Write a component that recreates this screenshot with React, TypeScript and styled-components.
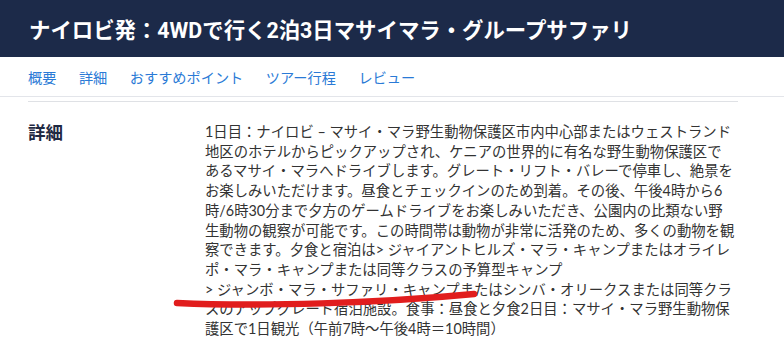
import styled, { createGlobalStyle } from "styled-components";

const GlobalStyle = createGlobalStyle`
  body {
    margin: 0;
    background: #fff;
    font-family: "Lato", "Noto Sans CJK JP", sans-serif;
  }
`;

const navItems = ["概要", "詳細", "おすすめポイント", "ツアー行程", "レビュー"];

const detailLines = [
  "1日目：ナイロビ – マサイ・マラ野生動物保護区市内中心部またはウェストランド",
  "地区のホテルからピックアップされ、ケニアの世界的に有名な野生動物保護区で",
  "あるマサイ・マラへドライブします。グレート・リフト・バレーで停車し、絶景を",
  "お楽しみいただけます。昼食とチェックインのため到着。その後、午後4時から6",
  "時/6時30分まで夕方のゲームドライブをお楽しみいただき、公園内の比類ない野",
  "生動物の観察が可能です。この時間帯は動物が非常に活発のため、多くの動物を観",
  "察できます。夕食と宿泊は> ジャイアントヒルズ・マラ・キャンプまたはオライレ",
  "ポ・マラ・キャンプまたは同等クラスの予算型キャンプ",
  "> ジャンボ・マラ・サファリ・キャンプまたはシンバ・オリークスまたは同等クラ",
  "スのアップグレード宿泊施設。食事：昼食と夕食2日目：マサイ・マラ野生動物保",
  "護区で1日観光（午前7時～午後4時＝10時間）",
];

const App = () => {
  return (
    <Page>
      <GlobalStyle />
      <Header>
        <Title>ナイロビ発：4WDで行く2泊3日マサイマラ・グループサファリ</Title>
      </Header>
      <Nav>
        {navItems.map((item) => (
          <NavLink key={item}>{item}</NavLink>
        ))}
      </Nav>
      <Content>
        <Section>
          <SectionTitle>詳細</SectionTitle>
          <Body>
            {detailLines.map((line, i) => (
              <Line key={i}>{line}</Line>
            ))}
          </Body>
        </Section>
      </Content>
      {/* red pen mark drawn over the text */}
      <Scribble width="784" height="340" viewBox="0 0 784 340">
        <path
          d="M177 303 C 260 307, 380 303, 474 294"
          fill="none"
          stroke="#e11d1d"
          strokeWidth="6.5"
          strokeLinecap="round"
        />
      </Scribble>
    </Page>
  );
};

export default App;

const Page = styled.div`
  position: relative;
  width: 784px;
  height: 340px;
  overflow: hidden;
`;

const Header = styled.header`
  height: 57px;
  padding: 0 29px;
  display: flex;
  align-items: center;
  background-color: #1c2a49;
`;

const Title = styled.h1`
  margin: 0;
  color: #fff;
  font-size: 21.4px;
  font-weight: 700;
  font-family: "Roboto", "Noto Sans CJK JP", sans-serif;
`;

const Nav = styled.nav`
  height: 39px;
  padding: 0 28px;
  display: flex;
  align-items: center;
  column-gap: 22.5px;
  border-bottom: 1px solid #e3e5ea;
`;

const NavLink = styled.a`
  color: #2a7ad6;
  font-size: 14.2px;
  font-family: "Roboto", "Noto Sans CJK JP", sans-serif;
  cursor: pointer;
`;

const Content = styled.main`
  margin: 4px 46px 0 28px;
  border-top: 1px solid #dfe1e5;
`;

const Section = styled.section`
  padding-top: 20px;
  display: flex;
  align-items: flex-start;
`;

const SectionTitle = styled.h2`
  width: 177px;
  margin: 0;
  flex-shrink: 0;
  color: #1f2942;
  font-size: 17.5px;
  line-height: 20px;
  font-weight: 700;
  font-family: "Noto Sans CJK JP", sans-serif;
`;

const Body = styled.div`
  color: #333;
  font-size: 14.35px;
  line-height: 19.7px;
`;

const Line = styled.div`
  white-space: nowrap;
`;

const Scribble = styled.svg`
  position: absolute;
  top: 0;
  left: 0;
  pointer-events: none;
`;
